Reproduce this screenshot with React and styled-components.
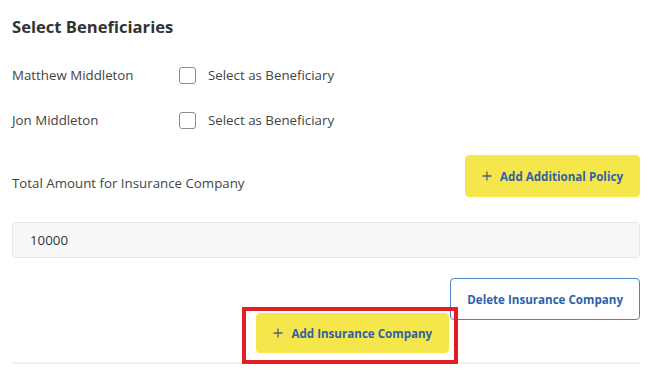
import React from "react";
import styled, { createGlobalStyle } from "styled-components";

const Global = createGlobalStyle`
  html, body { margin: 0; padding: 0; background: #fff; }
  body { font-family: "Open Sans", "Noto Sans", sans-serif; color: #444; }
  * { box-sizing: border-box; }
`;

const Page = styled.div`
  width: 670px;
  padding: 15px 30px 0 12px;
  display: flex;
  flex-direction: column;
`;

const Title = styled.h2`
  margin: 0;
  font-size: 16.6px;
  line-height: 24px;
  font-weight: 700;
  color: #333;
`;

const Rows = styled.div`
  margin-top: 21px;
  display: flex;
  flex-direction: column;
  gap: 15px;
`;

const Row = styled.div`
  height: 30px;
  display: flex;
  align-items: center;
`;

const Name = styled.span`
  width: 167px;
  font-size: 13.3px;
  color: #444;
`;

const CheckLabel = styled.label`
  display: flex;
  align-items: center;
  gap: 12px;
  font-size: 13.3px;
  color: #444;
`;

const Box = styled.span`
  width: 17px;
  height: 17px;
  border: 1px solid #8c8c8c;
  border-radius: 3px;
  background: #fff;
`;

const PolicyRow = styled.div`
  margin-top: 20px;
  display: flex;
  justify-content: space-between;
  align-items: flex-start;
`;

const Label = styled.span`
  margin-top: 18px;
  font-size: 13.3px;
  line-height: 20px;
  color: #444;
`;

const Button = styled.button`
  flex: none;
  height: ${(p) => p.$h}px;
  padding: 0 16px 0 ${(p) => (p.$outline ? 16 : 16)}px;
  border-radius: 4px;
  font-family: "Open Sans", "Noto Sans", sans-serif;
  font-size: 11.6px;
  font-weight: 700;
  color: #2f62a6;
  white-space: nowrap;
  display: inline-flex;
  align-items: center;
  gap: 8px;
  cursor: pointer;
  background: ${(p) => (p.$outline ? "#fff" : "#f5e64c")};
  border: 1px solid ${(p) => (p.$outline ? "#4f82c4" : "#f5e64c")};
`;

const Input = styled.div`
  margin-top: 25px;
  height: 36px;
  border: 1px solid #e6e6e6;
  border-radius: 4px;
  background: #f8f8f8;
  padding: 0 17px;
  display: flex;
  align-items: center;
  font-size: 13.3px;
  color: #333;
`;

const Actions = styled.div`
  margin-top: 20px;
  display: flex;
  justify-content: flex-end;
  align-items: flex-start;
  gap: 1px;
`;

const Highlight = styled.div`
  position: relative;
  margin-top: 35px;
  display: flex;
  &::after {
    content: "";
    position: absolute;
    top: -6px;
    left: -14px;
    right: -9px;
    bottom: -11px;
    border: 4px solid #e41c23;
    pointer-events: none;
    z-index: 2;
  }
`;

const Divider = styled.hr`
  margin: 9px 0 0;
  border: 0;
  height: 2px;
  background: #f0f0f0;
`;

const PlusIcon = () => (
  <svg width="10" height="10" viewBox="0 0 10 10">
    <path d="M5 0.5v9M0.5 5h9" stroke="#4a5f80" strokeWidth="1.3" fill="none" />
  </svg>
);

const people = ["Matthew Middleton", "Jon Middleton"];

export default function App() {
  return (
    <>
      <Global />
      <Page>
        <Title>Select Beneficiaries</Title>
        <Rows>
          {people.map((p) => (
            <Row key={p}>
              <Name>{p}</Name>
              <CheckLabel>
                <Box />
                Select as Beneficiary
              </CheckLabel>
            </Row>
          ))}
        </Rows>
        <PolicyRow>
          <Label>Total Amount for Insurance Company</Label>
          <Button $h={42}>
            <PlusIcon />
            Add Additional Policy
          </Button>
        </PolicyRow>
        <Input>10000</Input>
        <Actions>
          <Highlight>
            <Button $h={40}>
              <PlusIcon />
              Add Insurance Company
            </Button>
          </Highlight>
          <Button $h={42} $outline>
            Delete Insurance Company
          </Button>
        </Actions>
        <Divider />
      </Page>
    </>
  );
}
